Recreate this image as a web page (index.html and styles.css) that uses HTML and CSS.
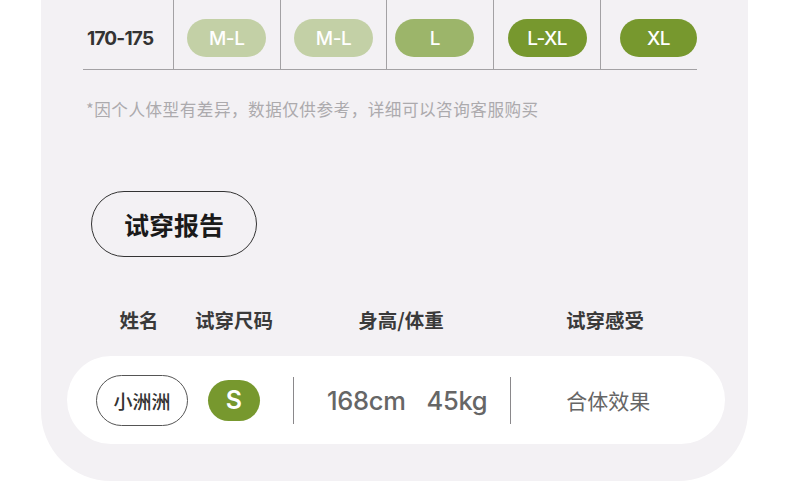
FILE: index.html
```html
<!DOCTYPE html>
<html lang="zh-CN">
<head>
  <meta charset="UTF-8">
  <title>尺码推荐 | 试穿报告</title>
  <link rel="stylesheet" href="styles.css">
</head>
<body>

  <div class="panel">
    <div class="size-row">
      <div class="cell cell-height">170-175</div>
      <div class="cell"><span class="pill pale">M-L</span></div>
      <div class="cell"><span class="pill pale">M-L</span></div>
      <div class="cell"><span class="pill mid shift-l">L</span></div>
      <div class="cell"><span class="pill deep">L-XL</span></div>
      <div class="cell"><span class="pill deep shift-r">XL</span></div>
    </div>

    <p class="note">*因个人体型有差异，数据仅供参考，详细可以咨询客服购买</p>

    <div class="report-title">试穿报告</div>

    <div class="report-head">
      <span class="col-name">姓名</span>
      <span class="col-size">试穿尺码</span>
      <span class="col-body">身高/体重</span>
      <span class="col-feel">试穿感受</span>
    </div>

    <div class="report-card">
      <span class="name-tag">小洲洲</span>
      <span class="size-tag">S</span>
      <span class="divider"></span>
      <span class="body-data">
        <span>168cm</span>
        <span>45kg</span>
      </span>
      <span class="divider second"></span>
      <span class="feel">合体效果</span>
    </div>
  </div>

</body>
</html>
```

FILE: styles.css
```css
* {
  margin: 0;
  padding: 0;
  box-sizing: border-box;
}

body {
  width: 790px;
  height: 502px;
  background: #fff;
  overflow: hidden;
  font-family: 'Inter', 'Noto Sans CJK SC', sans-serif;
}

.panel {
  width: 707px;
  height: 481px;
  margin-left: 41px;
  background: #f3f1f4;
  border-radius: 0 0 70px 70px;
}

/* size table row */
.size-row {
  display: flex;
  width: 614px;
  height: 70px;
  margin-left: 42px;
  border-bottom: 1px solid #a3a1a4;
}

.cell {
  width: 107px;
  height: 69px;
  display: flex;
  align-items: center;
  justify-content: center;
  padding-top: 7px;
  border-left: 1px solid #a3a1a4;
}

.cell:last-child {
  width: 97px;
  justify-content: flex-start;
  padding-left: 19px;
}

.cell-height {
  width: 90px;
  border-left: none;
  justify-content: flex-start;
  padding-left: 4px;
  font-size: 19px;
  font-weight: 700;
  letter-spacing: -0.8px;
  color: #333;
}

.pill {
  width: 79px;
  height: 38px;
  border-radius: 19px;
  display: flex;
  align-items: center;
  justify-content: center;
  color: #fff;
  font-size: 19px;
  font-weight: 500;
  letter-spacing: -0.5px;
}

.pale { background: #c3d0a6; }
.mid { background: #9cb56a; }
.deep { background: #77982e; }
.shift-l { margin-right: 11px; }

.note {
  margin: 27px 0 0 45px;
  font-family: 'Noto Sans CJK SC', sans-serif;
  font-size: 16.6px;
  color: #acaaad;
  letter-spacing: 0.5px;
}

.report-title {
  width: 166px;
  height: 66px;
  margin: 70px 0 0 50px;
  border: 1px solid #333;
  border-radius: 33px;
  display: flex;
  align-items: center;
  justify-content: center;
  font-family: 'Noto Sans CJK SC', sans-serif;
  font-size: 25px;
  font-weight: 700;
  color: #1a1a1a;
}

.report-head {
  display: flex;
  margin-top: 49px;
  font-family: 'Noto Sans CJK SC', sans-serif;
  font-size: 19.5px;
  font-weight: 700;
  color: #3a3a3a;
  line-height: 28px;
}

.report-head span {
  text-align: center;
}

.col-name { width: 80px; margin-left: 58px; }
.col-size { width: 80px; margin-left: 15px; }
.col-body { width: 120px; margin-left: 67px; }
.col-feel { width: 120px; margin-left: 84px; }

.report-card {
  width: 658px;
  height: 88px;
  margin: 22px 0 0 26px;
  background: #fff;
  border-radius: 44px;
  display: flex;
  align-items: center;
  padding-left: 29px;
}

.name-tag {
  width: 92px;
  height: 51px;
  border: 1px solid #555;
  border-radius: 26px;
  display: flex;
  align-items: center;
  justify-content: center;
  font-family: 'Noto Sans CJK SC', sans-serif;
  font-size: 19px;
  font-weight: 500;
  color: #333;
}

.size-tag {
  width: 52px;
  height: 41px;
  margin-left: 20px;
  border-radius: 21px;
  background: #77982e;
  color: #fff;
  display: flex;
  align-items: center;
  justify-content: center;
  font-size: 25px;
  font-weight: 600;
}

.divider {
  width: 1px;
  height: 47px;
  margin-left: 33px;
  background: #8a888b;
}

.divider.second {
  margin-left: 23px;
}

.body-data {
  display: flex;
  gap: 21px;
  margin-left: 33px;
  font-size: 25.5px;
  font-weight: 500;
  color: #666;
  letter-spacing: -0.3px;
}

.feel {
  margin-left: 55px;
  font-family: 'Noto Sans CJK SC', sans-serif;
  font-size: 21px;
  color: #666;
}
```
